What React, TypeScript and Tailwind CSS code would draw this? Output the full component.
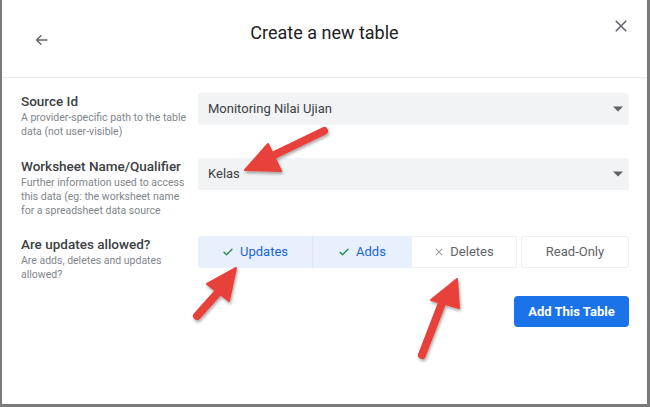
import React from "react";

const Check = () => (
  <svg width="12" height="12" viewBox="0 0 24 24" className="shrink-0">
    <path d="M4 12.5l5 5L20 6.5" fill="none" stroke="#1e8e3e" strokeWidth="2.6" strokeLinecap="round" strokeLinejoin="round" />
  </svg>
);

const Cross = () => (
  <svg width="10" height="10" viewBox="0 0 24 24" className="shrink-0">
    <path d="M5 5l14 14M19 5L5 19" fill="none" stroke="#9aa0a6" strokeWidth="2.6" strokeLinecap="round" />
  </svg>
);

const Caret = () => (
  <svg width="10" height="6" viewBox="0 0 10 5">
    <path d="M0 0h10L5 5z" fill="#5f6368" />
  </svg>
);

function Field({ title, desc, children }: { title: string; desc: React.ReactNode; children: React.ReactNode }) {
  return (
    <div className="flex">
      <div className="w-[177px] shrink-0 whitespace-nowrap">
        <div className="text-[13.5px] leading-[17px] font-medium text-[#3c4043]">{title}</div>
        <div className="text-[10.5px] leading-[14px] text-[#80868b] mt-[1px]">{desc}</div>
      </div>
      <div className="flex-1">{children}</div>
    </div>
  );
}

function Select({ value }: { value: string }) {
  return (
    <div className="h-[32px] bg-[#f1f3f4] rounded-[3px] flex items-center justify-between pl-[10px] pr-[6px]">
      <span className="text-[13px] text-[#3c4043]">{value}</span>
      <Caret />
    </div>
  );
}

export default function App() {
  return (
    <div
      className="relative w-[650px] h-[407px] bg-white border-l-2 border-r-[3px] border-b-[3px] border-[#7a7a7a] overflow-hidden"
      style={{ fontFamily: "Roboto, 'Liberation Sans', sans-serif" }}
    >
      {/* header */}
      <div className="h-[78px] relative flex items-start justify-center border-b border-[#ececec] shadow-[0_1px_2px_rgba(0,0,0,0.04)]">
        <div className="absolute left-[31px] top-[31px] w-[18px] h-[18px] flex items-center justify-center">
          <svg width="16" height="16" viewBox="0 0 24 24">
            <path d="M20 12H5M11 5l-7 7 7 7" fill="none" stroke="#5f6368" strokeWidth="2" />
          </svg>
        </div>
        <div className="mt-[19px] text-[18px] text-[#202124]">Create a new table</div>
        <div className="absolute right-[18px] top-[18px] w-[16px] h-[16px] flex items-center justify-center">
          <svg width="14" height="14" viewBox="0 0 24 24">
            <path d="M3 3l18 18M21 3L3 21" fill="none" stroke="#5f6368" strokeWidth="2.6" />
          </svg>
        </div>
      </div>

      {/* body */}
      <div className="pl-[19px] pr-[18px] pt-[15px] flex flex-col">
        <Field
          title="Source Id"
          desc={<>A provider-specific path to the table<br />data (not user-visible)</>}
        >
          <Select value="Monitoring Nilai Ujian" />
        </Field>
        <div className="h-[19px]" />
        <Field
          title="Worksheet Name/Qualifier"
          desc={<>Further information used to access<br />this data (eg: the worksheet name<br />for a spreadsheet data source</>}
        >
          <Select value="Kelas" />
        </Field>
        <div className="h-[18px]" />
        <Field title="Are updates allowed?" desc={<>Are adds, deletes and updates<br />allowed?</>}>
          <div className="flex h-[32px] text-[13px]">
            <div className="w-[115px] bg-[#e8f0fe] rounded-l-[3px] border-r border-[#dfe6f3] flex items-center justify-center gap-[6px] text-[#1967d2]">
              <Check />
              <span>Updates</span>
            </div>
            <div className="w-[98px] bg-[#e8f0fe] flex items-center justify-center gap-[6px] text-[#1967d2]">
              <Check />
              <span>Adds</span>
            </div>
            <div className="w-[106px] border border-[#eeeeee] flex items-center justify-center gap-[6px] text-[#5f6368]">
              <Cross />
              <span>Deletes</span>
            </div>
            <div className="w-[4px]" />
            <div className="flex-1 border border-[#eeeeee] rounded-r-[3px] flex items-center justify-center text-[#5f6368]">
              Read-Only
            </div>
          </div>
          <div className="flex justify-end mt-[28px]">
            <div className="w-[115px] h-[31px] bg-[#1a73e8] rounded-[4px] flex items-center justify-center text-white text-[13px] font-bold">
              Add This Table
            </div>
          </div>
        </Field>
      </div>

      {/* red arrows overlay */}
      <svg className="absolute left-0 top-0 pointer-events-none" width="650" height="407" viewBox="0 0 650 407">
        <defs>
          <filter id="sh" x="-20%" y="-20%" width="140%" height="140%">
            <feDropShadow dx="1" dy="2" stdDeviation="1.6" floodColor="#000" floodOpacity="0.35" />
          </filter>
        </defs>
        <g filter="url(#sh)" fill="#e8403a" stroke="#e8403a" strokeLinecap="round" strokeLinejoin="round">
          <line x1="322" y1="131" x2="266" y2="158" strokeWidth="8" />
          <polygon points="243,170 266,144 279,171" strokeWidth="2" />
          <line x1="195" y1="316" x2="220" y2="288" strokeWidth="8" />
          <polygon points="234,268 205,284 227,301" strokeWidth="2" />
          <line x1="420" y1="355" x2="442" y2="298" strokeWidth="8" />
          <polygon points="455,279 429,300 457,308" strokeWidth="2" />
        </g>
      </svg>
    </div>
  );
}
